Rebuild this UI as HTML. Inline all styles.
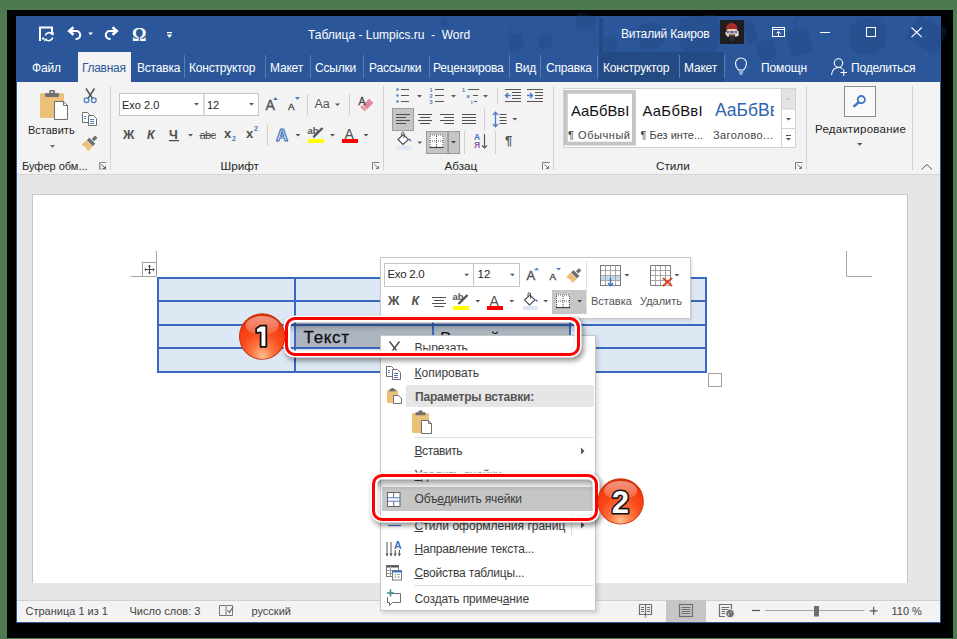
<!DOCTYPE html>
<html><head><meta charset="utf-8">
<style>
*{margin:0;padding:0;box-sizing:border-box}
html,body{width:957px;height:639px;overflow:hidden;background:#4e7a4f;font-family:"Liberation Sans",sans-serif;position:relative;-webkit-font-smoothing:antialiased}
.a{position:absolute}
.t{position:absolute;white-space:nowrap;line-height:14px;font-size:12px}
.w{color:#fff}
.sep{position:absolute;width:1px;background:#5a7cb4;top:56px;height:24px}
.rt{color:#444}
.gsep{position:absolute;width:1px;background:#d4d4d4}
.isep{position:absolute;width:1px;background:#d9d9d9}
.st{color:#444;font-size:11px}
svg{position:absolute;overflow:visible}
</style></head>
<body>
<div class="a" style="left:7px;top:10px;width:946px;height:628px;background:#000"></div>
<!-- window -->
<div class="a" style="left:16px;top:16px;width:925px;height:607px;background:#2b579a"></div>
<div class="a" style="left:17px;top:82px;width:923px;height:540px;background:#e6e6e6"></div>
<!-- title bar -->

<!-- doodles -->
<svg style="left:0;top:0" width="957" height="82">
 <g fill="#1d3f78" fill-opacity="0.26">
  <path d="M442 17 h5 v4 c2 1 2 5 0 6 h-5 c-2 -1 -2 -5 0 -6 Z"/>
  <g transform="rotate(-12 515 42)"><rect x="509" y="34" width="14" height="17" rx="2.5"/><path d="M513 34 L513 28 L519 26" fill="none" stroke="#1d3f78" stroke-opacity="0.22" stroke-width="1.5"/></g>
  <path d="M545.5 34 c-6 0 -8 5 -7 9 c1 4 4 6 7 6 c3 0 6 -2 7 -6 c1 -4 -1 -9 -7 -9 Z M546 34 c0 -3 3 -5 6 -5" />
  <g transform="rotate(14 585 23)"><rect x="575" y="14" width="20" height="16" rx="3"/></g>
  <g transform="rotate(-10 610 44)"><rect x="604" y="37" width="13" height="15" rx="2.5"/></g>
  <g transform="rotate(-12 651 36)"><rect x="638" y="23" width="26" height="26" rx="8"/></g>
  <path d="M680 18 c-4 10 -2 30 6 36 c10 6 26 2 32 -8 c5 -10 2 -26 -4 -32 Z"/>
  <g transform="rotate(-15 750 32)"><rect x="744" y="20" width="12" height="24" rx="5"/></g>
  <g transform="rotate(-20 766 50)"><rect x="757" y="40" width="18" height="20" rx="6"/></g>
  <g transform="rotate(-15 799 41)"><rect x="788" y="29" width="22" height="26" rx="3"/><path d="M800 29 L800 20 L808 18" fill="none" stroke="#1d3f78" stroke-opacity="0.22" stroke-width="2"/></g>
  <path d="M858 20 c-10 4 -12 20 -6 28 c6 8 20 9 28 3 c8 -6 9 -20 3 -28 c-5 -6 -15 -7 -25 -3 Z M868 18 c4 -2 10 -2 14 0"/>
  <g transform="rotate(28 926 34)"><rect x="910" y="20" width="34" height="28" rx="4"/></g>
 </g>
</svg>
<!-- QAT -->
<svg style="left:0;top:0" width="957" height="82">
 <g fill="none" stroke="#fff" stroke-width="2">
  <path d="M40 41 V27.5 H52 V33"/>
  <path d="M42 38.5 H44"/>
 </g>
 <g fill="none" stroke="#fff" stroke-width="1.6">
  <path d="M45.3 35.5 A4 4 0 0 1 52.3 34.2"/>
  <path d="M52.7 37.5 A4 4 0 0 1 45.7 39.2"/>
 </g>
 <path d="M50.5 34.8 L53.8 35.2 L53.6 31.8 Z" fill="#fff"/>
 <path d="M47.5 38.8 L44.2 38.4 L44.4 41.8 Z" fill="#fff"/>
 <!-- undo -->
 <path d="M70 31 H76.2 A4 4 0 0 1 76.2 39 H75.5" fill="none" stroke="#fff" stroke-width="2.1"/>
 <path d="M73.5 27.2 L69.2 31 L73.5 34.8" fill="none" stroke="#fff" stroke-width="2.6"/>
 <path d="M88.3 32.5 H93 L90.65 35.2 Z" fill="#fff"/>
 <!-- redo -->
 <path d="M116 31 H109.8 A4 4 0 0 0 109.8 39 H110.5" fill="none" stroke="#fff" stroke-width="2.1"/>
 <path d="M112.5 27.2 L116.8 31 L112.5 34.8" fill="none" stroke="#fff" stroke-width="2.6"/>
 <!-- customize -->
 <rect x="167" y="32" width="5" height="1.2" fill="#fff"/>
 <path d="M166.8 34.5 H172.2 L169.5 38 Z" fill="#fff"/>
 <!-- ribbon display -->
 <rect x="772.5" y="27.5" width="12" height="9" fill="none" stroke="#fff" stroke-width="1"/>
 <path d="M772.5 29.5 H784.5" stroke="#fff" stroke-width="1"/>
 <path d="M778.5 36 V31.5 M776.3 33.6 L778.5 31.4 L780.7 33.6" fill="none" stroke="#fff" stroke-width="1"/>
 <!-- min -->
 <path d="M820 32.5 H830" stroke="#fff" stroke-width="1"/>
 <!-- max -->
 <rect x="866.5" y="27.5" width="9" height="9" fill="none" stroke="#fff" stroke-width="1"/>
 <!-- close -->
 <path d="M911.5 27.5 L921.8 37.2 M921.8 27.5 L911.5 37.2" stroke="#fff" stroke-width="1.1"/>
</svg>
<div class="t w" style="left:132px;top:26px;font-family:'Liberation Serif',serif;font-size:18px;line-height:18px;font-weight:bold">&#937;</div>
<div class="t w" style="left:308px;top:28px">Таблица - Lumpics.ru&nbsp; -&nbsp; Word</div>
<div class="t w" style="left:621px;top:27px;letter-spacing:-0.15px">Виталий Каиров</div>
<!-- avatar -->
<div class="a" style="left:720px;top:20px;width:24px;height:24px;background:#1e1d22"></div>
<svg style="left:720px;top:20px" width="24" height="24">
 <path d="M6 9.5 C6 5 8.5 3 11.5 3 C14.5 3 17.5 5 17.5 9.5 Z" fill="#b52a22"/>
 <rect x="9.5" y="5.5" width="2" height="2" fill="#3d4a50"/>
 <rect x="6.5" y="9" width="11" height="8" rx="2" fill="#edd0b4"/>
 <rect x="7" y="11" width="10" height="2.2" fill="#556080"/>
 <rect x="8.5" y="11.3" width="2.5" height="1.6" fill="#9aa8c8"/>
 <rect x="13" y="11.3" width="2.5" height="1.6" fill="#9aa8c8"/>
 <rect x="9" y="14.5" width="6" height="1.3" fill="#3a2a2a"/>
 <path d="M8.5 16 H15.5 L14 21 H10 Z" fill="#2e2a2e"/>
 <rect x="17" y="11" width="1.5" height="5" fill="#f0f0f0"/>
 <rect x="5.5" y="12" width="1.5" height="3" fill="#edd0b4"/>
</svg>
<!-- tabs -->
<div class="a" style="left:599px;top:18px;width:4px;height:34px;background:#244a84"></div>
<div class="a" style="left:599px;top:52px;width:125px;height:30px;background:#244a84"></div>
<div class="a" style="left:78px;top:52px;width:53px;height:30px;background:#f3f3f3"></div>
<div class="t w" style="left:32px;top:61px;letter-spacing:-0.2px">Файл</div>
<div class="t" style="left:82px;top:61px;color:#2b579a;letter-spacing:-0.3px">Главная</div>
<div class="t w" style="left:137px;top:61px;letter-spacing:-0.2px">Вставка</div>
<div class="t w" style="left:189px;top:61px;letter-spacing:-0.2px">Конструктор</div>
<div class="t w" style="left:270px;top:61px;letter-spacing:-0.2px">Макет</div>
<div class="t w" style="left:315px;top:61px;letter-spacing:-0.2px">Ссылки</div>
<div class="t w" style="left:369px;top:61px;letter-spacing:-0.2px">Рассылки</div>
<div class="t w" style="left:433px;top:61px;letter-spacing:-0.2px">Рецензирова</div>
<div class="t w" style="left:515px;top:61px;letter-spacing:-0.2px">Вид</div>
<div class="t w" style="left:546px;top:61px;letter-spacing:-0.2px">Справка</div>
<div class="t w" style="left:603px;top:61px;letter-spacing:-0.2px">Конструктор</div>
<div class="t w" style="left:684px;top:61px;letter-spacing:-0.2px">Макет</div>
<div class="t w" style="left:761px;top:61px;width:46px;overflow:hidden;letter-spacing:-0.1px">Помощник</div>
<div class="t w" style="left:851px;top:61px;letter-spacing:-0.2px">Поделиться</div>
<div class="sep" style="left:184px;top:55px;height:23px"></div>
<div class="sep" style="left:265px;top:55px;height:23px"></div>
<div class="sep" style="left:310px;top:55px;height:23px"></div>
<div class="sep" style="left:363px;top:55px;height:23px"></div>
<div class="sep" style="left:429px;top:55px;height:23px"></div>
<div class="sep" style="left:509px;top:55px;height:23px"></div>
<div class="sep" style="left:540px;top:55px;height:23px"></div>
<div class="sep" style="left:597px;top:55px;height:23px"></div>
<div class="sep" style="left:679px;top:55px;height:23px"></div>
<div class="sep" style="left:724px;top:55px;height:23px"></div>
<svg style="left:0;top:0" width="957" height="82">
 <!-- bulb -->
 <path d="M738.5 70 C736 67.5 735.5 65.5 735.5 63.5 A5.5 5.5 0 0 1 746.5 63.5 C746.5 65.5 746 67.5 743.5 70 Z" fill="none" stroke="#fff" stroke-width="1.1"/>
 <path d="M738.8 72 H743.2 M739.5 74 H742.5" stroke="#fff" stroke-width="1.1"/>
 <!-- person -->
 <circle cx="838.5" cy="63" r="4.2" fill="none" stroke="#fff" stroke-width="1.1"/>
 <path d="M831.5 75 C832 70 835 67.5 838.5 67.5 C840 67.5 841.5 68 842.5 68.7" fill="none" stroke="#fff" stroke-width="1.1"/>
 <path d="M840.5 72.5 H847 M843.75 69.2 V75.8" stroke="#fff" stroke-width="1.1"/>
</svg>

<!-- ribbon -->
<div class="a" style="left:17px;top:82px;width:923px;height:93px;background:#f3f3f3;border-bottom:1px solid #d5d5d5"></div>

<!-- ============ RIBBON ============ -->
<svg style="left:0;top:0" width="0" height="0">
 <defs>
  <pattern id="dotsH" width="2" height="1" patternUnits="userSpaceOnUse"><rect width="1" height="1" fill="#555"/></pattern>
  <pattern id="dotsV" width="1" height="2" patternUnits="userSpaceOnUse"><rect width="1" height="1" fill="#555"/></pattern>
 </defs>
</svg>
<svg style="left:0;top:0" width="957" height="180">
 <!-- group separators -->
 <g fill="#d2d2d2">
  <rect x="110" y="86" width="1" height="84"/>
  <rect x="383" y="86" width="1" height="84"/>
  <rect x="553" y="86" width="1" height="84"/>
  <rect x="806" y="86" width="1" height="84"/>
  <rect x="912" y="86" width="1" height="84"/>
 </g>
 <!-- paste -->
 <rect x="40" y="93" width="24" height="25" rx="1.5" fill="#ebc17a"/>
 <rect x="45" y="93.3" width="14" height="3.6" rx="0.8" fill="#6f6f6f"/>
 <rect x="49.3" y="90" width="5.6" height="4" rx="1" fill="#6f6f6f"/>
 <rect x="51.2" y="91.3" width="1.8" height="1.6" fill="#f3f3f3"/>
 <path d="M54.5 101.5 H63.5 L67.5 105.5 V119.5 H54.5 Z" fill="#fff" stroke="#6f6f6f" stroke-width="1"/>
 <path d="M63.5 101.5 V105.5 H67.5" fill="none" stroke="#6f6f6f" stroke-width="1"/>
 <path d="M50 145 H55 L52.5 148 Z" fill="#6f6f6f"/>
 <!-- scissors -->
 <path d="M86 88.5 L92.8 98.8 M94.5 88.5 L87.7 98.8" stroke="#505050" stroke-width="1.5"/>
 <circle cx="86.5" cy="100.3" r="2.4" fill="none" stroke="#4a7cc2" stroke-width="1.2"/>
 <circle cx="93.8" cy="100.3" r="2.4" fill="none" stroke="#4a7cc2" stroke-width="1.2"/>
 <!-- copy -->
 <path d="M82.5 112.5 H87.5 L89.5 114.5 V122.5 H82.5 Z" fill="#fff" stroke="#6f6f6f" stroke-width="1"/>
 <path d="M88.5 115.5 H93.5 L96.5 118.5 V125.5 H88.5 Z" fill="#fff" stroke="#6f6f6f" stroke-width="1"/>
 <path d="M84 116.5 H86 M84 118.5 H86 M90 119.5 H94 M90 121.5 H94 M90 123.5 H94" stroke="#4a7cc2" stroke-width="1"/>
 <!-- format painter -->
 <g transform="translate(89.8,143.2) rotate(-45)">
  <rect x="0" y="-4.3" width="3.6" height="8.6" rx="0.6" fill="#6f6f6f"/>
  <rect x="4.4" y="-1.7" width="4.8" height="3.4" rx="0.8" fill="#6f6f6f"/>
  <path d="M-0.4 -4.7 V4.7 L-7 4.3 L-5.8 0 L-7.2 -4.5 Z" fill="#ebc17a"/>
 </g>
 <g fill="#a0a0a0"><path d="M99.5 163 V169.5 H106.5 V168.5 H100.5 V163 Z"/><path d="M101.5 163.5 H103.5"/></g>
 <path d="M99.5 162.5 H106.5 V169.5" fill="none" stroke="#909090" stroke-width="0" />
 <path d="M101.5 164.5 L105.5 168.5 M105.5 166 V168.5 H103" fill="none" stroke="#606060" stroke-width="1"/>
 <path d="M99.5 169.5 V162.5 H106.5" fill="none" stroke="#909090" stroke-width="1"/>

 <!-- font boxes -->
 <rect x="119.5" y="93.5" width="84.5" height="22" fill="#fff" stroke="#c6c6c6"/>
 <rect x="204" y="93.5" width="54.5" height="22" fill="#fff" stroke="#c6c6c6"/>
 <path d="M194 103 H199 L196.5 105.5 Z M249 103 H254 L251.5 105.5 Z" fill="#555"/>
 <!-- grow / shrink -->
 <path d="M273 100 L275.5 97 L278 100 Z" fill="#4a7cc2"/>
 <path d="M295 97 L300 97 L297.5 100 Z" fill="#4a7cc2"/>
 <rect x="307" y="94" width="1" height="21" fill="#d0d0d0"/>
 <path d="M335 103.5 H340 L337.5 106 Z" fill="#555"/>
 <rect x="349" y="94" width="1" height="21" fill="#d0d0d0"/>
 <!-- eraser -->
 <path d="M362.8 105.2 L369 99 L373 103 L366.8 109.2 Z" fill="#e5879a" stroke="#e5879a" stroke-width="0.6" stroke-linejoin="round"/>
 <path d="M360.2 106.8 L361.6 105.4 L366 109.8 L364.6 111.2 Z" fill="#e5879a"/>
 <!-- row2 dropdowns -->
 <path d="M188 134 H193 L190.5 136.5 Z M295.5 134 H300.5 L298 136.5 Z M330 134 H335 L332.5 136.5 Z M363.5 134 H368.5 L366 136.5 Z" fill="#555"/>
 <rect x="267" y="125" width="1" height="21" fill="#d0d0d0"/>
 <!-- underline -->
 <rect x="169" y="140" width="10" height="1.2" fill="#444"/>
 <!-- highlight -->
 <rect x="308" y="139" width="16" height="4" fill="#ffff00"/>
 <path d="M313.5 137 L322.5 128" stroke="#555" stroke-width="2.4"/>
 <path d="M312.5 138.5 L314 135.5 L315 136.5 Z" fill="#555"/>
 <!-- font color bar -->
 <rect x="342" y="139" width="16" height="4" fill="#ff0000"/>

 <!-- paragraph row1 -->
 <g fill="#4a7cc2">
  <circle cx="397.5" cy="89.5" r="1.2"/><circle cx="397.5" cy="95.5" r="1.2"/><circle cx="397.5" cy="101.5" r="1.2"/>
 </g>
 <g stroke="#555" stroke-width="1">
  <path d="M401 89.5 H409 M401 95.5 H409 M401 101.5 H409"/>
  <path d="M435 89.5 H444 M435 95.5 H444 M435 101.5 H444"/>
  <path d="M468 89.5 H479 M473 95.5 H478 M474 101.5 H477"/>
 </g>
 <g fill="#4a7cc2" font-family="Liberation Sans" font-size="5.5" font-weight="bold">
  <text x="429.5" y="91.5">1</text><text x="429.5" y="97.5">2</text><text x="429.5" y="103.5">3</text>
  <text x="462" y="91.5">1</text><text x="466.5" y="97.5">a</text><text x="471" y="103.5">i</text>
 </g>
 <path d="M417 95 H422 L419.5 97.5 Z M451 95 H456 L453.5 97.5 Z M483 95 H488 L485.5 97.5 Z" fill="#555"/>
 <rect x="497" y="88" width="1" height="17" fill="#d0d0d0"/>
 <!-- indents -->
 <g stroke="#555" stroke-width="1">
  <path d="M505 89.5 H521 M512 92.5 H521 M512 95.5 H521 M512 98.5 H521 M505 101.5 H521"/>
  <path d="M527 89.5 H543 M535 92.5 H543 M535 95.5 H543 M535 98.5 H543 M527 101.5 H543"/>
 </g>
 <g stroke="#4a7cc2" stroke-width="1.4" fill="none">
  <path d="M510.5 95.5 H505.5 M508 93 L505.5 95.5 L508 98"/>
  <path d="M527 95.5 H532.5 M530 93 L532.5 95.5 L530 98"/>
 </g>
 <!-- align buttons -->
 <rect x="392.5" y="108.5" width="21" height="22" fill="#c5c5c5" stroke="#9d9d9d"/>
 <g stroke="#505050" stroke-width="1.2">
  <path d="M396 114.5 H410 M396 117.5 H406 M396 120.5 H410 M396 123.5 H406"/>
  <path d="M418 114.5 H432 M420 117.5 H430 M418 120.5 H432 M420 123.5 H430"/>
  <path d="M440 114.5 H454 M444 117.5 H454 M440 120.5 H454 M444 123.5 H454"/>
  <path d="M462 114.5 H476 M462 117.5 H476 M462 120.5 H476 M462 123.5 H476"/>
  <path d="M499.5 114.5 H506.5 M499.5 117.5 H506.5 M499.5 120.5 H506.5 M499.5 123.5 H506.5"/>
 </g>
 <rect x="484" y="108" width="1" height="23" fill="#d0d0d0"/>
 <g stroke="#4a7cc2" stroke-width="1.3" fill="none">
  <path d="M495.5 112.5 V126.5 M493 115 L495.5 112.3 L498 115 M493 124 L495.5 126.7 L498 124"/>
 </g>
 <path d="M512.3 118 H517.3 L514.8 120.5 Z" fill="#555"/>
 <!-- shading -->
 <rect x="396.5" y="145.5" width="15" height="4" fill="#dce6f4"/>
 <path d="M398 139.5 L403.5 134.5 L408.5 139.5 L403 144.5 Z" fill="#fff" stroke="#505050" stroke-width="1.1"/>
 <path d="M401.5 136 V133.5 A1.2 1.2 0 0 1 404 133.5 V138" fill="none" stroke="#505050" stroke-width="1"/>
 <path d="M408.5 139.5 C410.5 138 411.5 140 411 142 C410.5 141 409.5 140.5 408.5 139.5 Z" fill="#2f6cc0"/>
 <path d="M417.5 141.5 H422 L419.75 144 Z" fill="#555"/>
 <!-- borders button -->
 <rect x="426.5" y="131.5" width="33" height="22" fill="#c5c5c5" stroke="#9a9a9a"/>
 <rect x="447.5" y="131.5" width="1.2" height="22" fill="#8a8a8a"/>
 <rect x="429.5" y="134.5" width="14" height="13" fill="#fff"/>
 <rect x="429.5" y="134.5" width="14" height="1" fill="url(#dotsH)"/>
 <rect x="429.5" y="140.5" width="14" height="1" fill="url(#dotsH)"/>
 <rect x="429.5" y="134.5" width="1" height="13" fill="url(#dotsV)"/>
 <rect x="436" y="134.5" width="1" height="13" fill="url(#dotsV)"/>
 <rect x="442.5" y="134.5" width="1" height="13" fill="url(#dotsV)"/>
 <path d="M429.5 147.5 H443.5" stroke="#444" stroke-width="1.2"/>
 <path d="M451 141 H456 L453.5 143.5 Z" fill="#444"/>
 <rect x="464" y="131" width="1" height="23" fill="#d0d0d0"/>
 <rect x="495" y="131" width="1" height="23" fill="#d0d0d0"/>
 <!-- sort -->
 <path d="M484.5 134 V148 M482 145.5 L484.5 148 L487 145.5" stroke="#555" stroke-width="1.2" fill="none"/>
 <!-- launchers -->
 <g fill="none" stroke="#7a7a7a" stroke-width="1">
  <path d="M372.5 169.5 V162.5 H379.5"/><path d="M374.5 164.5 L378.5 168.5 M378.5 166 V168.5 H376"/>
  <path d="M542.5 169.5 V162.5 H549.5"/><path d="M544.5 164.5 L548.5 168.5 M548.5 166 V168.5 H546"/>
  <path d="M795.5 169.5 V162.5 H802.5"/><path d="M797.5 164.5 L801.5 168.5 M801.5 166 V168.5 H799"/>
 </g>

 <!-- styles gallery -->
 <rect x="563.5" y="88.5" width="232" height="59" fill="#fff" stroke="#d2d2d2"/>
 <rect x="565.8" y="91.8" width="68.1" height="51.8" fill="none" stroke="#c4c4c4" stroke-width="3.8"/>
 <rect x="781.5" y="88.5" width="14" height="59" fill="#fff" stroke="#d2d2d2"/>
 <rect x="782" y="89" width="13" height="20" fill="#e3e3e3"/>
 <path d="M781.5 109 H795.5 M781.5 128.5 H795.5" stroke="#d2d2d2"/>
 <path d="M786 100 H791 L788.5 97.5 Z" fill="#c8c8c8"/>
 <path d="M786 118 H791 L788.5 120.5 Z" fill="#555"/>
 <path d="M786 135.5 H791" stroke="#555"/>
 <path d="M786 138 H791 L788.5 140.5 Z" fill="#555"/>

 <!-- editing -->
 <rect x="844.5" y="86.5" width="31" height="30" fill="#f9f9f9" stroke="#8c8c8c"/>
 <circle cx="861.3" cy="99.6" r="3.6" fill="none" stroke="#3b74c0" stroke-width="1.8"/>
 <path d="M858.5 102.5 L854.2 106.2" stroke="#3b74c0" stroke-width="2.4" stroke-linecap="round"/>
 <path d="M857 143 H862.4 L859.7 145.8 Z" fill="#555"/>
 <path d="M921.5 169.5 L926.8 164.5 L932 169.5" fill="none" stroke="#555" stroke-width="1"/>
</svg>
<!-- ribbon text -->
<div class="t" style="left:28px;top:123px;font-size:11px;color:#262626">Вставить</div>
<div class="t" style="left:22px;top:159px;font-size:11px;color:#262626">Буфер обм...</div>
<div class="t" style="left:122px;top:98px;font-size:11px;color:#262626">Exo 2.0</div>
<div class="t" style="left:207px;top:98px;font-size:11px;color:#262626">12</div>
<div class="t" style="left:265.5px;top:97px;font-size:14px;line-height:16px;color:#505050;-webkit-text-stroke:0.35px #505050">A</div>
<div class="t" style="left:288px;top:100.5px;font-size:9.8px;line-height:12px;color:#505050;-webkit-text-stroke:0.4px #505050">A</div>
<div class="t" style="left:314.5px;top:97px;font-size:12.5px;color:#555">Aa</div>
<div class="t" style="left:358.5px;top:94.5px;font-size:10.5px;line-height:12px;color:#444;-webkit-text-stroke:0.3px #444">A</div>
<div class="t" style="left:123px;top:128px;font-size:12.5px;font-weight:bold;color:#505050">Ж</div>
<div class="t" style="left:147px;top:128px;font-size:12.5px;font-weight:bold;font-style:italic;color:#505050">К</div>
<div class="t" style="left:169px;top:128px;font-size:12.5px;font-weight:bold;color:#505050">Ч</div>
<div class="t" style="left:199.5px;top:128px;font-size:11px;color:#505050;letter-spacing:-0.5px;text-decoration:line-through">abc</div>
<div class="t" style="left:224px;top:127px;font-size:13px;font-weight:bold;color:#505050">x</div>
<div class="t" style="left:232px;top:132px;font-size:7px;font-weight:bold;color:#3f73bd">2</div>
<div class="t" style="left:246px;top:127px;font-size:13px;font-weight:bold;color:#505050">x</div>
<div class="t" style="left:254px;top:122px;font-size:7px;font-weight:bold;color:#3f73bd">2</div>
<div class="t" style="left:276px;top:126px;font-size:16.5px;line-height:18px;font-weight:bold;color:#fff;-webkit-text-stroke:1.2px #3f73bd">A</div>
<div class="t" style="left:307.5px;top:124px;font-size:9.5px;font-weight:bold;color:#555">ab</div>
<div class="t" style="left:344.5px;top:126px;font-size:14px;line-height:16px;color:#505050">A</div>
<div class="t" style="left:474px;top:132px;font-size:8.5px;line-height:10px;font-weight:bold;color:#3f73bd">A</div>
<div class="t" style="left:474px;top:139.5px;font-size:8.5px;line-height:10px;font-weight:bold;color:#8c5fae">Я</div>
<div class="t" style="left:505px;top:133px;font-size:13px;line-height:16px;font-weight:bold;color:#555">&#182;</div>
<div class="t" style="left:220.5px;top:158.5px;font-size:11.7px;color:#262626">Шрифт</div>
<div class="t" style="left:444.5px;top:158.5px;font-size:11.7px;color:#262626">Абзац</div>
<div class="t" style="left:656px;top:158.5px;font-size:11.7px;color:#262626">Стили</div>
<div class="a" style="left:567px;top:94px;width:65px;height:48px;overflow:hidden">
 <div class="t" style="left:4px;top:8px;font-size:14.8px;line-height:18px;color:#111">АаБбВвI</div>
 <div class="t" style="left:1px;top:34px;font-size:11px;color:#444;letter-spacing:0.55px">¶ Обычный</div>
</div>
<div class="t" style="left:642.5px;top:102px;font-size:14.8px;line-height:18px;color:#111;letter-spacing:0.3px">АаБбВвI</div>
<div class="t" style="left:640.5px;top:128px;font-size:11px;color:#444;letter-spacing:0px">¶ Без инте...</div>
<div class="a" style="left:708px;top:95px;width:66px;height:50px;overflow:hidden">
 <div class="t" style="left:7px;top:5px;font-size:17.5px;line-height:20px;color:#2f63ae">АаБбВвГг</div>
 <div class="t" style="left:5px;top:33px;font-size:11px;color:#444;letter-spacing:0.4px">Заголово...</div>
</div>
<div class="t" style="left:815px;top:122px;font-size:11.5px;color:#262626;letter-spacing:0.25px">Редактирование</div>

<!-- status -->
<div class="a" style="left:17px;top:600px;width:923px;height:22px;background:#f3f3f3;border-top:1px solid #d0d0d0"></div>
<!-- page -->
<div class="a" style="left:32px;top:194px;width:876px;height:389px;background:#fff;border:1px solid #c8c8c8;border-bottom:none"></div>

<!-- ============ DOCUMENT ============ -->
<svg style="left:0;top:0" width="957" height="639">
 <!-- crop marks -->
 <path d="M131 276.5 H156.5 V251" fill="none" stroke="#a6a6a6" stroke-width="1"/>
 <path d="M846.5 251 V276.5 H872" fill="none" stroke="#a6a6a6" stroke-width="1"/>
 <!-- table -->
 <rect x="158" y="278" width="548" height="93" fill="#dde8f5"/>
 <rect x="295" y="325" width="274" height="23" fill="#adb5c0"/>
 <g fill="#3a67c0">
  <rect x="157" y="277" width="550" height="2"/>
  <rect x="157" y="300" width="550" height="2"/>
  <rect x="157" y="324" width="550" height="2"/>
  <rect x="157" y="347" width="550" height="2"/>
  <rect x="157" y="371" width="550" height="2"/>
  <rect x="157" y="277" width="2" height="96"/>
  <rect x="294" y="277" width="2" height="96"/>
  <rect x="432" y="277" width="2" height="96"/>
  <rect x="569" y="277" width="2" height="96"/>
  <rect x="705" y="277" width="2" height="96"/>
 </g>
 <!-- move handle -->
 <rect x="142.5" y="262.5" width="14" height="14" fill="#fff" stroke="#a0a0a0"/>
 <path d="M149.5 265 V274 M145 269.5 H154" stroke="#444" stroke-width="1"/>
 <path d="M147.8 266.5 L149.5 264.8 L151.2 266.5 Z M147.8 272.5 L149.5 274.2 L151.2 272.5 Z M146 267.8 L144.3 269.5 L146 271.2 Z M153 267.8 L154.7 269.5 L153 271.2 Z" fill="#444"/>
 <!-- resize handle -->
 <rect x="708.5" y="373.5" width="13" height="13" fill="#fff" stroke="#a0a0a0"/>
</svg>
<div class="t" style="left:303.5px;top:328px;font-size:17px;line-height:20px;color:#111;letter-spacing:0.7px;-webkit-text-stroke:0.3px #111">Текст</div>
<div class="t" style="left:440px;top:328.5px;font-size:17px;line-height:20px;color:#111;letter-spacing:0.7px">Второй</div>

<!-- mini toolbar -->
<div class="a" style="left:380px;top:257px;width:311px;height:62px;background:#fff;border:1px solid #c8c8c8;box-shadow:1px 1px 3px rgba(0,0,0,0.12)"></div>
<svg style="left:0;top:0" width="957" height="639">
 <rect x="384.5" y="263.5" width="89" height="23" fill="#fff" stroke="#c6c6c6"/>
 <rect x="473.5" y="263.5" width="46" height="23" fill="#fff" stroke="#c6c6c6"/>
 <path d="M464.3 273.8 H469 L466.65 276.3 Z M510 273.8 H514.8 L512.4 276.3 Z" fill="#555"/>
 <path d="M533.9 270.3 L536.45 267.8 L539 270.3 Z" fill="#4a7cc2"/>
 <path d="M556.3 268 H561 L558.65 270.5 Z" fill="#4a7cc2"/>
 <g transform="translate(574,275.5) rotate(-45)">
  <rect x="0" y="-4.2" width="3.5" height="8.4" rx="0.6" fill="#6f6f6f"/>
  <rect x="4.3" y="-1.7" width="4.5" height="3.4" rx="0.8" fill="#6f6f6f"/>
  <path d="M-0.4 -4.6 V4.6 L-6.5 4.2 L-5.5 0 L-6.8 -4.4 Z" fill="#ebc17a"/>
 </g>
 <rect x="586" y="261" width="1" height="54" fill="#e0e0e0"/>
 <g stroke="#505050" stroke-width="1.2">
  <path d="M432 297.5 H446 M434 300.5 H444 M432 303.5 H446 M434 306.5 H444"/>
 </g>
 <rect x="453" y="306" width="16" height="4" fill="#ffff00"/>
 <path d="M458.5 304 L467.5 295" stroke="#555" stroke-width="2.4"/>
 <path d="M475.4 300 H480.2 L477.8 302.5 Z M509.4 300 H514.2 L511.8 302.5 Z M543.4 300 H548.1 L545.75 302.5 Z" fill="#555"/>
 <rect x="487" y="306" width="16" height="4" fill="#ff0000"/>
 <rect x="523" y="306" width="14.5" height="4" fill="#dce6f4"/>
 <path d="M524.5 300 L530 295 L535 300 L529.5 305 Z" fill="#fff" stroke="#505050" stroke-width="1.1"/>
 <path d="M528 296.5 V294 A1.2 1.2 0 0 1 530.5 294 V298.5" fill="none" stroke="#505050" stroke-width="1"/>
 <path d="M535 300 C537 298.5 538 300.5 537.5 302.5 C537 301.5 536 301 535 300 Z" fill="#2f6cc0"/>
 <rect x="552" y="290" width="34" height="24" fill="#c6c6c6"/>
 <rect x="556" y="294.5" width="13.5" height="13" fill="#fff"/>
 <g fill="#555">
  <rect x="556" y="294.5" width="14" height="1" fill="url(#dotsH)"/>
  <rect x="556" y="300.5" width="14" height="1" fill="url(#dotsH)"/>
  <rect x="556" y="294.5" width="1" height="13" fill="url(#dotsV)"/>
  <rect x="562.5" y="294.5" width="1" height="13" fill="url(#dotsV)"/>
  <rect x="569" y="294.5" width="1" height="13" fill="url(#dotsV)"/>
 </g>
 <rect x="556" y="307" width="14" height="1.2" fill="#444"/>
 <path d="M577.3 300 H582.1 L579.7 302.5 Z" fill="#444"/>
 <!-- insert table icon -->
 <g transform="translate(600,265)">
  <rect x="0.5" y="0.5" width="20" height="20" fill="#fff" stroke="#7a7a7a"/>
  <rect x="1" y="10" width="19" height="5" fill="#c7d7ec"/>
  <path d="M5.5 0.5 V20.5 M10.5 0.5 V20.5 M15.5 0.5 V20.5 M0.5 5.5 H20.5 M0.5 10.5 H20.5 M0.5 15.5 H20.5" stroke="#a6a6a6" stroke-width="1"/>
  <rect x="0.5" y="0.5" width="20" height="20" fill="none" stroke="#7a7a7a"/>
  <path d="M10.5 13 V20.5 M8 18 L10.5 20.7 L13 18" stroke="#3b74c0" stroke-width="1.4" fill="none"/>
 </g>
 <path d="M624.5 274 H629.3 L626.9 276.5 Z M674.5 274 H679.3 L676.9 276.5 Z" fill="#555"/>
 <!-- delete table icon -->
 <g transform="translate(650,265)">
  <path d="M0.5 0.5 H20.5 V20.5 H0.5 Z M5.5 0.5 V20.5 M10.5 0.5 V20.5 M15.5 0.5 V20.5 M0.5 5.5 H20.5 M0.5 10.5 H20.5 M0.5 15.5 H20.5" fill="none" stroke="#a6a6a6" stroke-width="1"/>
  <path d="M0.5 0.5 H20.5 V14 M0.5 0.5 V20.5 H12" fill="none" stroke="#7a7a7a"/>
  <path d="M13 13 L22 21 M22 13 L13 21" stroke="#d9472b" stroke-width="2"/>
 </g>
</svg>
<div class="t" style="left:387.5px;top:267px;font-size:11.5px;color:#262626;letter-spacing:-0.3px">Exo 2.0</div>
<div class="t" style="left:477.5px;top:267px;font-size:11.5px;color:#262626">12</div>
<div class="t" style="left:526.5px;top:269px;font-size:13px;line-height:14px;color:#505050;-webkit-text-stroke:0.35px #505050">A</div>
<div class="t" style="left:549.5px;top:272px;font-size:9.8px;line-height:10px;color:#505050;-webkit-text-stroke:0.4px #505050">A</div>
<div class="t" style="left:388px;top:294px;font-size:12.5px;font-weight:bold;color:#505050">Ж</div>
<div class="t" style="left:411.5px;top:294px;font-size:12.5px;font-weight:bold;font-style:italic;color:#505050">К</div>
<div class="t" style="left:452.5px;top:290px;font-size:9.5px;font-weight:bold;color:#555">ab</div>
<div class="t" style="left:489.5px;top:293px;font-size:14px;line-height:16px;color:#505050">A</div>
<div class="t" style="left:591px;top:294px;font-size:11px;color:#555">Вставка</div>
<div class="t" style="left:640px;top:294px;font-size:11px;color:#555">Удалить</div>

<!-- context menu -->
<div class="a" style="left:380px;top:335px;width:216px;height:276px;background:#fff;border:1px solid #c6c6c6;box-shadow:2px 2px 4px rgba(0,0,0,0.15)"></div>
<div class="a" style="left:406px;top:385px;width:188px;height:22px;background:#e6e6e6"></div>
<div class="a" style="left:414px;top:437px;width:180px;height:1px;background:#e0e0e0"></div>
<div class="a" style="left:414px;top:585px;width:180px;height:1px;background:#e0e0e0"></div>
<div class="a" style="left:382px;top:487px;width:212px;height:24px;background:#c6c6c6"></div>
<div class="a" style="left:571px;top:514px;width:1px;height:22px;background:#e0e0e0"></div>
<svg style="left:0;top:0" width="957" height="639">
 <!-- scissors -->
 <path d="M389.5 341.5 L397.5 352 M399.5 341.5 L391.5 352" stroke="#505050" stroke-width="1.5"/>
 <!-- copy -->
 <path d="M386.5 366.5 H391.5 L393.5 368.5 V376.5 H386.5 Z" fill="#fff" stroke="#6f6f6f" stroke-width="1"/>
 <path d="M392.5 369.5 H397.5 L400.5 372.5 V379.5 H392.5 Z" fill="#fff" stroke="#6f6f6f" stroke-width="1"/>
 <path d="M388 370.5 H390 M388 372.5 H390 M394 373.5 H398 M394 375.5 H398 M394 377.5 H398" stroke="#4a7cc2" stroke-width="1"/>
 <!-- small paste -->
 <rect x="387" y="390" width="11" height="13" rx="1" fill="#ebc17a"/>
 <rect x="389.5" y="389" width="6" height="2.4" fill="#6f6f6f"/>
 <rect x="391.3" y="388" width="2.4" height="1.5" fill="#6f6f6f"/>
 <path d="M393.5 395.5 H398.5 L401.5 398.5 V403.5 H393.5 Z" fill="#fff" stroke="#6f6f6f" stroke-width="1"/>
 <!-- big paste -->
 <rect x="412" y="413" width="17" height="20" rx="1.2" fill="#ebc17a"/>
 <rect x="415.5" y="412.3" width="10" height="3" rx="0.6" fill="#6f6f6f"/>
 <rect x="418.5" y="410.5" width="4" height="2.5" rx="0.8" fill="#6f6f6f"/>
 <path d="M421.5 420.5 H428.5 L431.5 423.5 V433.5 H421.5 Z" fill="#fff" stroke="#6f6f6f" stroke-width="1"/>
 <path d="M428.5 420.5 V423.5 H431.5" fill="none" stroke="#6f6f6f" stroke-width="1"/>
 <!-- submenu arrows -->
 <path d="M581 447.5 V454.5 L584.5 451 Z M581 521.5 V528.5 L584.5 525 Z" fill="#555"/>
 <!-- merge icon -->
 <rect x="387.5" y="492.5" width="12.5" height="14" fill="#fff" stroke="#666"/>
 <path d="M393.7 492.5 V497.5 M393.7 501.5 V506.5" stroke="#666"/>
 <path d="M387.5 497.8 H400 M387.5 501.2 H400" stroke="#4a7cc2" stroke-width="1"/>
 <!-- border style line -->
 <path d="M388 525.5 H401" stroke="#3b6cc0" stroke-width="1.2"/>
 <!-- text direction -->
 <g stroke="#555" stroke-width="1" fill="none">
  <path d="M387 542 V555.5 M391 542 V555.5 M395.2 550 V555.5 M399.4 550 V555.5"/>
 </g>
 <path d="M385.5 553.5 L387 556.5 L388.5 553.5 Z M389.5 553.5 L391 556.5 L392.5 553.5 Z M393.7 553.5 L395.2 556.5 L396.7 553.5 Z M397.9 553.5 L399.4 556.5 L400.9 553.5 Z" fill="#555"/>
 <!-- table props -->
 <rect x="386.5" y="565.5" width="12" height="11" fill="#fff" stroke="#777"/>
 <rect x="386.5" y="565.5" width="12" height="2" fill="#555"/>
 <path d="M386.5 570.5 H398.5 M386.5 573.5 H392.5 M390.5 565.5 V576.5" stroke="#999"/>
 <rect x="392.5" y="570.5" width="9" height="9.5" fill="#fff" stroke="#777"/>
 <rect x="392.5" y="570.5" width="9" height="2" fill="#3b74c0"/>
 <path d="M394.5 574.5 H396 M397.5 574.5 H399.5 M394.5 577 H396 M397.5 577 H399.5" stroke="#777"/>
 <!-- comment -->
 <path d="M390.5 593.5 H400.5 V602.5 H392.5 L389.5 605.5 V602.5 H387.5 V597" fill="none" stroke="#6f6f6f" stroke-width="1"/>
 <path d="M390.5 589.5 V596.5 M387 593 H394" stroke="#3a8f8f" stroke-width="1.6"/>
</svg>
<div class="t" style="left:394px;top:539.5px;font-size:10.5px;line-height:10px;font-weight:bold;color:#3f73bd">A</div>
<div class="t" style="left:414.5px;top:341px;color:#3b3b3b">Вырезать</div>
<div class="t" style="left:414.5px;top:365.5px;color:#3b3b3b"><u>К</u>опировать</div>
<div class="t" style="left:415px;top:389.5px;color:#555;font-weight:bold;letter-spacing:-0.2px">Параметры вставки:</div>
<div class="t" style="left:414.5px;top:444px;color:#3b3b3b;letter-spacing:-0.4px"><u>В</u>ставить</div>
<div class="t" style="left:414.5px;top:468px;color:#3b3b3b"><u>У</u>далить ячейки...</div>
<div class="t" style="left:414.5px;top:492px;color:#3b3b3b;letter-spacing:-0.15px">Объ<u>е</u>динить ячейки</div>
<div class="t" style="left:414.5px;top:518.5px;color:#3b3b3b"><u>С</u>тили оформления границ</div>
<div class="t" style="left:414.5px;top:542px;color:#3b3b3b;letter-spacing:-0.2px"><u>Н</u>аправление текста...</div>
<div class="t" style="left:414.5px;top:565.5px;color:#3b3b3b;letter-spacing:-0.2px"><u>С</u>войства таблицы...</div>
<div class="t" style="left:414.5px;top:591.5px;color:#3b3b3b;letter-spacing:-0.1px">Создать примеч<u>а</u>ние</div>


<!-- status bar content -->
<div class="t st" style="left:25.5px;top:604px">Страница 1 из 1</div>
<div class="t st" style="left:129.5px;top:604px">Число слов: 3</div>
<div class="t st" style="left:251.5px;top:604px">русский</div>
<div class="t st" style="left:891.5px;top:604px">110 %</div>
<div class="a" style="left:666px;top:600px;width:40px;height:22px;background:#c6c6c6"></div>
<svg style="left:0;top:0" width="957" height="639">
 <!-- proofing -->
 <path d="M219.5 605.5 H225.5 L226 606.5 V616 L225.5 615.5 H219.5 Z" fill="none" stroke="#777" stroke-width="1"/>
 <path d="M226 606.5 L226.5 605.5 H232.5 V615.5 H226.5 L226 616" fill="none" stroke="#777" stroke-width="1"/>
 <path d="M227.5 610 L229.5 612.5 L233 607" fill="none" stroke="#666" stroke-width="1.2"/>
 <!-- read mode -->
 <path d="M639.5 604.5 H645.5 L645.5 616 M651.5 604.5 H645.5 M639.5 604.5 V614.5 H645.5 M651.5 604.5 V614.5 H645.5" fill="none" stroke="#6f6f6f" stroke-width="1.2"/>
 <path d="M641 607.5 H644 M641 609.5 H644 M641 611.5 H644 M647 607.5 H650 M647 609.5 H650 M647 611.5 H650" stroke="#6f6f6f" stroke-width="1"/>
 <path d="M644.5 616.5 L645.5 617.5 L646.5 616.5" fill="none" stroke="#6f6f6f"/>
 <!-- print layout -->
 <rect x="679.5" y="604.5" width="13" height="12" fill="none" stroke="#6f6f6f" stroke-width="1.2"/>
 <path d="M681.5 607.5 H690.5 M681.5 609.5 H690.5 M681.5 611.5 H690.5 M681.5 613.5 H690.5" stroke="#6f6f6f" stroke-width="1"/>
 <!-- web layout -->
 <path d="M725 616.5 H719.5 V604.5 H731.5 V610" fill="none" stroke="#6f6f6f" stroke-width="1.2"/>
 <path d="M721.5 607.5 H729.5 M721.5 609.5 H729.5 M721.5 611.5 H725 M721.5 613.5 H725" stroke="#6f6f6f" stroke-width="1"/>
 <circle cx="730" cy="613.5" r="4.3" fill="#6f6f6f" stroke="#f3f3f3" stroke-width="1"/>
 <path d="M727.5 612.5 L729 614 L728 616 M730.5 611.5 L731.5 613" stroke="#ddd" stroke-width="0.8" fill="none"/>
 <!-- zoom -->
 <path d="M752 610.5 H760" stroke="#555" stroke-width="1.2"/>
 <path d="M765 610.5 H864.5" stroke="#a6a6a6" stroke-width="1"/>
 <rect x="814" y="606" width="5" height="10.5" fill="#6f6f6f"/>
 <path d="M869.8 610.8 H877.6 M873.7 606.8 V614.8" stroke="#555" stroke-width="1.2"/>
</svg>

<!-- highlight rects -->
<div class="a" style="left:284.5px;top:316.5px;width:295px;height:39.5px;border:3.4px solid #ff0000;border-radius:10px;box-shadow:0 0 0 1.6px #fff, 2px 3px 5px 1.5px rgba(0,0,0,0.4), inset 0 0 0 2.4px #fff, inset 1px 7px 6px -1px rgba(0,0,0,0.38), inset 0 0 5px rgba(0,0,0,0.18)"></div>
<div class="a" style="left:371.5px;top:474px;width:226.5px;height:46.8px;border:3.4px solid #ff0000;border-radius:10px;box-shadow:0 0 0 1.6px #fff, 2px 3px 5px 1.5px rgba(0,0,0,0.4), inset 0 0 0 2.4px #fff, inset 1px 8px 7px -1px rgba(0,0,0,0.38), inset 0 0 5px rgba(0,0,0,0.18)"></div>

<!-- badges -->
<svg style="left:0;top:0" width="957" height="639">
 <defs>
  <radialGradient id="bg" cx="0.5" cy="0.8" r="0.75" fx="0.5" fy="0.95">
   <stop offset="0" stop-color="#ffc090"/>
   <stop offset="0.3" stop-color="#fd7a45"/>
   <stop offset="0.6" stop-color="#fa4c1a"/>
   <stop offset="0.88" stop-color="#f23a0e"/>
   <stop offset="1" stop-color="#dc300a"/>
  </radialGradient>
  <linearGradient id="hl" x1="0" y1="0" x2="0" y2="1">
   <stop offset="0" stop-color="#fff" stop-opacity="0.5"/>
   <stop offset="0.7" stop-color="#fff" stop-opacity="0.25"/>
   <stop offset="1" stop-color="#fff" stop-opacity="0.12"/>
  </linearGradient>
 </defs>
 <g>
  <circle cx="262.2" cy="336.5" r="23.2" fill="#c8300a"/>
  <circle cx="262.2" cy="336.5" r="22.4" fill="url(#bg)"/>
  <ellipse cx="262.2" cy="325.5" rx="16.5" ry="9.5" fill="url(#hl)"/>
 </g>
 <g>
  <circle cx="620.6" cy="501.4" r="23.2" fill="#c8300a"/>
  <circle cx="620.6" cy="501.4" r="22.4" fill="url(#bg)"/>
  <ellipse cx="620.6" cy="490.4" rx="16.5" ry="9.5" fill="url(#hl)"/>
 </g>
 <path d="M260.6 325.6 H266.3 V346.8 H260.6 V332.4 L256.2 333.1 V328.6 Z" fill="#fff" stroke="#111" stroke-width="1.8" stroke-linejoin="round"/>
 <text x="620.4" y="512.8" text-anchor="middle" style="font-family:'Liberation Sans'" font-weight="bold" font-size="31" fill="#fff" stroke="#111" stroke-width="3.2" paint-order="stroke" stroke-linejoin="round">2</text>
</svg>

</body></html>
